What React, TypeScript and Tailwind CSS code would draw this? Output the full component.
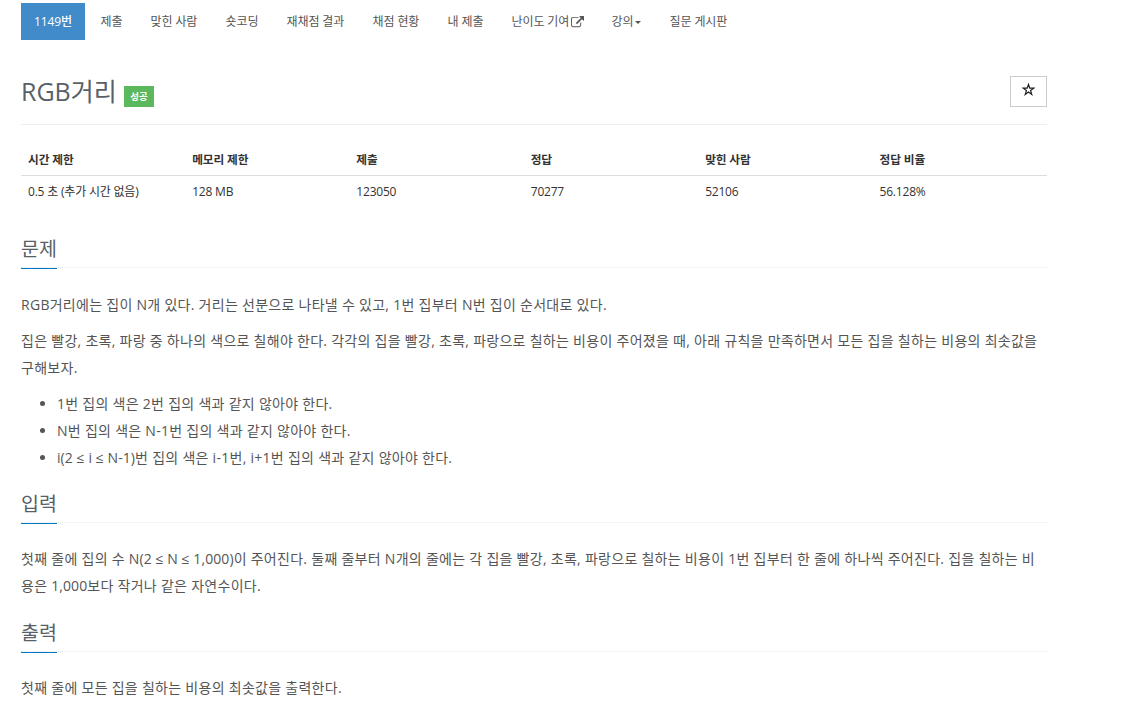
import type { ReactNode } from "react"

type SectionProps = {
    title: string
    className: string
    bodyClassName: string
    children: ReactNode
}

const tabs = [
    { label: "제출", width: "w-[50px]" },
    { label: "맞힌 사람", width: "w-[75px]" },
    { label: "숏코딩", width: "w-[61px]" },
    { label: "재채점 결과", width: "w-[86px]" },
    { label: "채점 현황", width: "w-[75px]" },
    { label: "내 제출", width: "w-[64px]" },
    { label: "난이도 기여", width: "w-[100px]", icon: "external" },
    { label: "강의", width: "w-[58px]", icon: "caret" },
    { label: "질문 게시판", width: "w-[70px]" }
]

const stats = [
    { label: "시간 제한", value: "0.5 초 (추가 시간 없음)", width: "w-[16%]" },
    { label: "메모리 제한", value: "128 MB", width: "w-[16%]" },
    { label: "제출", value: "123050", width: "w-[17%]" },
    { label: "정답", value: "70277", width: "w-[17%]" },
    { label: "맞힌 사람", value: "52106", width: "w-[17%]" },
    { label: "정답 비율", value: "56.128%", width: "w-[17%]" }
]

function ExternalIcon() {
    return (
        <svg viewBox="0 0 1792 1792" className="ml-0.5 h-[13px] w-[13px]" fill="currentColor">
            <path d="M1408 928v320q0 119-84.500 203.500t-203.500 84.500h-832q-119 0-203.500-84.500t-84.500-203.500v-832q0-119 84.500-203.500t203.500-84.500h704q14 0 23 9t9 23v64q0 14-9 23t-23 9h-704q-66 0-113 47t-47 113v832q0 66 47 113t113 47h832q66 0 113-47t47-113v-320q0-14 9-23t23-9h64q14 0 23 9t9 23zm384-864v512q0 26-19 45t-45 19-45-19l-176-176-652 652q-10 10-23 10t-23-10l-114-114q-10-10-10-23t10-23l652-652-176-176q-19-19-19-45t19-45 45-19h512q26 0 45 19t19 45z" />
        </svg>
    )
}

function Section({ title, className, bodyClassName, children }: SectionProps) {
    return (
        <section className={className}>
            <div className="flex h-[30px] border-b border-dotted border-[#e4e9f0]">
                <h2 className="h-[31px] w-9 whitespace-nowrap border-b border-[#0076c0] pt-px text-[19.5px] leading-[20px] text-[#585f69]">
                    {title}
                </h2>
            </div>
            <div className={`space-y-[9px] whitespace-nowrap text-[14px] leading-[27px] tracking-[0.28px] text-[#555] ${bodyClassName}`}>
                {children}
            </div>
        </section>
    )
}

function App() {
    return (
        <div className="h-[707px] w-[1122px] overflow-hidden bg-white pt-[3px] pl-[21px] font-['Open_Sans','Noto_Sans_CJK_KR',sans-serif] text-[#333]">
            <div className="w-[1026px]">
                <nav className="flex h-[37px] items-center whitespace-nowrap text-[12px] tracking-[-0.1px] text-[#555]">
                    <a className="mr-[15.5px] flex h-[37px] w-16 items-center justify-center bg-[#428bca] pt-px font-medium text-white">1149번</a>
                    {tabs.map((tab) => (
                        <a key={tab.label} className={`flex items-center pt-px ${tab.width}`}>
                            {tab.label}
                            {tab.icon === "external" && <ExternalIcon />}
                            {tab.icon === "caret" && (
                                <span className="ml-0.5 mt-px border-x-[3px] border-t-[3px] border-x-transparent border-t-[#555]" />
                            )}
                        </a>
                    ))}
                </nav>

                <header className="mt-9 flex h-[49px] justify-between border-b border-[#eee]">
                    <div className="flex whitespace-nowrap">
                        <h1 className="w-[103px] text-[25px] leading-[30px] text-[#585f69]">RGB거리</h1>
                        <span className="mt-[10px] flex h-[21px] w-[30px] items-center justify-center bg-[#5cb85c] pt-px text-[9.500px] font-semibold text-white">성공</span>
                    </div>
                    <button className="flex h-[31px] w-[37px] items-center justify-center border border-[#ccc] pr-px pb-[4px]">
                        <svg viewBox="0 0 24 24" className="h-[13px] w-[13px]" fill="none" stroke="#222" strokeWidth="2.2">
                            <path d="M12 2.500l2.400 7h7.300l-5.900 4.400 2.200 7.200-6-4.400-6 4.400 2.200-7.200-5.900-4.400h7.300z" />
                        </svg>
                    </button>
                </header>

                <table className="mt-[19px] w-full table-fixed whitespace-nowrap text-left text-[12px] tracking-[-0.2px]">
                    <thead>
                        <tr className="h-[31px] border-b border-[#ddd]">
                            {stats.map((stat) => (
                                <th key={stat.label} className={`pt-0.5 pl-[7px] text-[11.700px] font-bold tracking-[-0.1px] ${stat.width}`}>{stat.label}</th>
                            ))}
                        </tr>
                    </thead>
                    <tbody>
                        <tr className="h-[33px]">
                            {stats.map((stat) => (
                                <td key={stat.label} className="pl-[7px]">{stat.value}</td>
                            ))}
                        </tr>
                    </tbody>
                </table>

                <Section title="문제" className="mt-[30px]" bodyClassName="mt-[23px]">
                    <p>RGB거리에는 집이 N개 있다. 거리는 선분으로 나타낼 수 있고, 1번 집부터 N번 집이 순서대로 있다.</p>
                    <p>
                        집은 빨강, 초록, 파랑 중 하나의 색으로 칠해야 한다. 각각의 집을 빨강, 초록, 파랑으로 칠하는 비용이 주어졌을 때, 아래 규칙을 만족하면서 모든 집을 칠하는 비용의 최솟값을
                        <br />
                        구해보자.
                    </p>
                    <ul className="list-disc pl-9">
                        <li>1번 집의 색은 2번 집의 색과 같지 않아야 한다.</li>
                        <li>N번 집의 색은 N-1번 집의 색과 같지 않아야 한다.</li>
                        <li>
                            <span className="tracking-[0.08px]">i(2 ≤ i ≤ N-1)</span>번 집의 색은 i-1번, i+1번 집의 색과 같지 않아야 한다.
                        </li>
                    </ul>
                </Section>

                <Section title="입력" className="mt-[22px]" bodyClassName="mt-[22px]">
                    <p>
                        첫째 줄에 집의 수 <span className="tracking-[0.08px]">N(2 ≤ N ≤ 1,000)</span>이 주어진다. 둘째 줄부터 N개의 줄에는 각 집을 빨강, 초록, 파랑으로 칠하는 비용이 1번 집부터 한 줄에 하나씩 주어진다. 집을 칠하는 비
                        <br />
                        용은 <span className="tracking-[0.08px]">1,000</span>보다 작거나 같은 자연수이다.
                    </p>
                </Section>

                <Section title="출력" className="mt-[23px]" bodyClassName="mt-[22px]">
                    <p>첫째 줄에 모든 집을 칠하는 비용의 최솟값을 출력한다.</p>
                </Section>
            </div>
        </div>
    )
}

export default App
